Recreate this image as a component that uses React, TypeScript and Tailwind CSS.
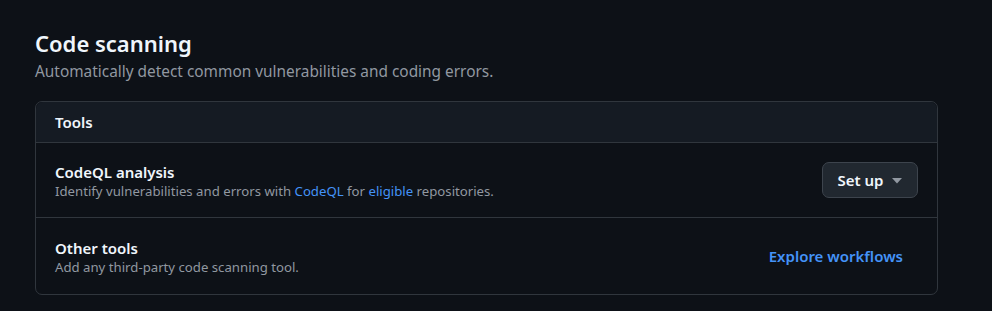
export default function App() {
  return (
    <main
      className="min-h-screen w-full bg-[#0d1117] text-[#e6edf3]"
      style={{ fontFamily: '"Noto Sans", "Open Sans", sans-serif' }}
    >
      <div className="w-[938px] pl-[35px] pt-[28px]">
        <h2 className="text-[22px] font-semibold leading-[30px] text-[#f0f6fc]">Code scanning</h2>
        <p className="mt-[3px] text-[15.4px] leading-[22px] text-[#9198a1]">
          Automatically detect common vulnerabilities and coding errors.
        </p>

        <div className="mt-[18px] rounded-[7px] border border-[#30363d]">
          <div className="flex h-[41px] items-center rounded-t-[7px] border-b border-[#30363d] bg-[#151b23] px-[19px]">
            <h3 className="text-[15px] font-semibold text-[#f0f6fc]">Tools</h3>
          </div>

          <div className="flex h-[75px] items-center justify-between border-b border-[#30363d] px-[19px]">
            <div className="pt-[2px]">
              <div className="text-[15px] font-semibold leading-[20px] text-[#f0f6fc]">CodeQL analysis</div>
              <div className="text-[13.2px] leading-[18px] text-[#9198a1]">
                Identify vulnerabilities and errors with{" "}
                <a className="text-[#4493f8]" href="#">CodeQL</a> for{" "}
                <a className="text-[#4493f8]" href="#">eligible</a> repositories.
              </div>
            </div>
            <button className="flex h-[36px] w-[96px] items-center justify-center gap-[9px] rounded-[7px] border border-[#3d444d] bg-[#212830] text-[15px] font-semibold text-[#f0f6fc]">
              Set up
              <svg width="10" height="6" viewBox="0 0 10 6" className="mt-[1px]">
                <path d="M0 0h10L5 5.5z" fill="#9198a1" />
              </svg>
            </button>
          </div>

          <div className="flex h-[76px] items-center justify-between px-[19px]">
            <div className="pt-[2px]">
              <div className="text-[15px] font-semibold leading-[20px] text-[#f0f6fc]">Other tools</div>
              <div className="text-[13.2px] leading-[18px] text-[#9198a1]">
                Add any third-party code scanning tool.
              </div>
            </div>
            <a
              href="#"
              className="flex h-[36px] items-center px-[15px] text-[15px] font-semibold text-[#4493f8]"
            >
              Explore workflows
            </a>
          </div>
        </div>
      </div>
    </main>
  );
}
